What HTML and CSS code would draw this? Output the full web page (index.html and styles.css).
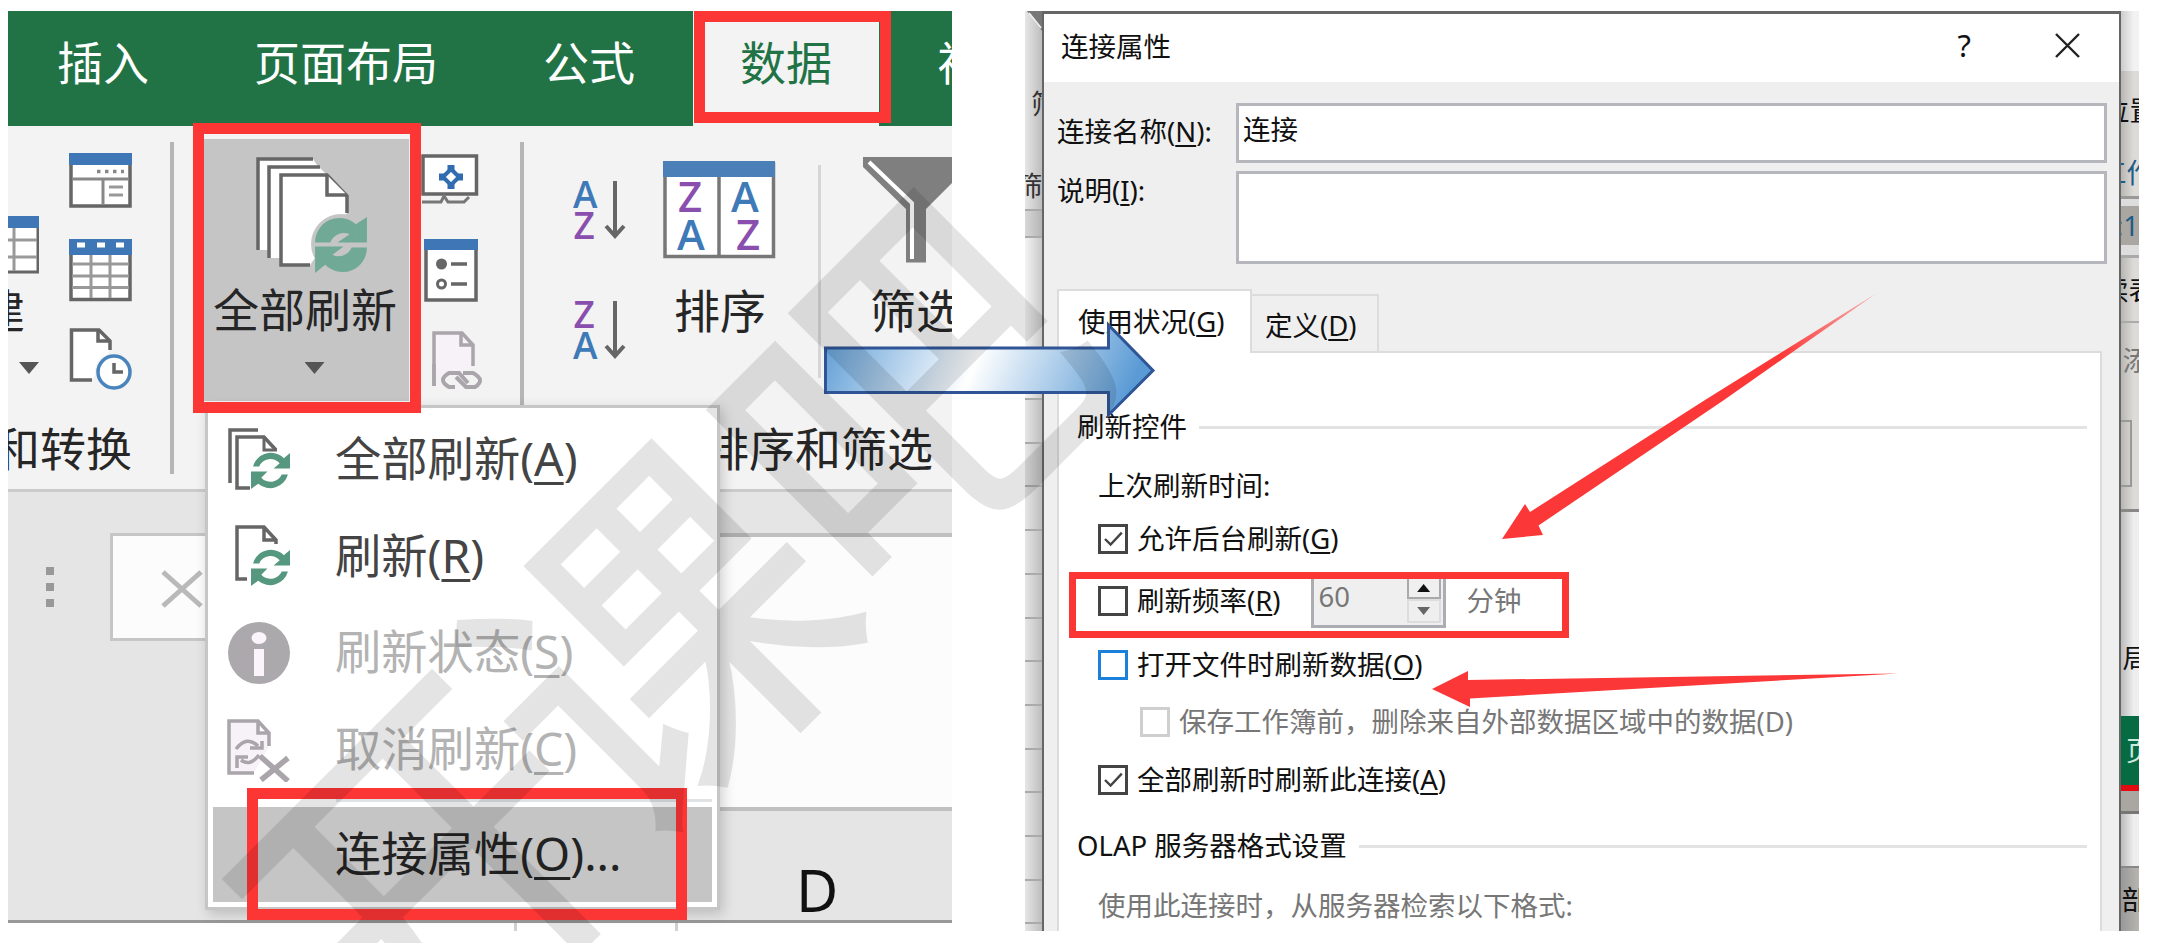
FILE: index.html
```html
<!DOCTYPE html>
<html lang="zh-CN">
<head>
<meta charset="utf-8">
<title>连接属性</title>
<link rel="stylesheet" href="styles.css">
</head>
<body>
<svg class="defs" width="0" height="0" aria-hidden="true">
  <defs>
    <symbol id="cycle" viewBox="0 0 56 56">
      <path d="M3 26A24 24 0 0 1 43 8L54 1V26H25L37 18A14 14 0 0 0 18 26Z"/>
      <path d="M54 31A24 24 0 0 1 13 48L3 56V30H31L20 38A14 14 0 0 0 39 31Z"/>
    </symbol>
    <symbol id="thin-cycle" viewBox="0 0 40 40">
      <path d="M3 15A18 18 0 0 1 33 7L39 2V17H23L29 12A12 12 0 0 0 9 15Z"/>
      <path d="M37 23A18 18 0 0 1 8 32L1 37V20H17L11 26A12 12 0 0 0 31 23Z"/>
    </symbol>
  </defs>
</svg>

<main class="stage">
  <section class="excel">
    <nav class="tabs">
      <span class="tab">插入</span><span class="tab">页面布局</span><span class="tab">公式</span><span class="tab active">数据</span><span class="tab">视图</span>
    </nav>
    <div class="ribbon">
      <div class="group g-transform">
        <div class="tools">
          <div class="col-new">
            <svg width="31" height="58" viewBox="8 216 31 58"><path d="M0 217H38V272H0Z" fill="#fff" stroke="#666" stroke-width="3"/><path d="M0 216H39V228H0Z" fill="#3f76b5"/><path d="M8 240H37M8 257H37M14 228V271" stroke="#999" stroke-width="3"/></svg>
            <span class="cut-new">建</span>
            <i class="caret"></i>
          </div>
          <div class="col-small">
            <svg width="63" height="55" viewBox="69 153 63 55"><path d="M71 155H130V206H71Z" fill="#fff" stroke="#666" stroke-width="3.5"/><path d="M69 153H132V165H69Z" fill="#3f76b5"/><path d="M72 179H129M103 180V205" stroke="#888" stroke-width="3"/><path d="M97 171.500H124" stroke="#888" stroke-width="3.500" stroke-dasharray="3.500 4.500"/><path d="M109 187H123M109 195H123" stroke="#999" stroke-width="3"/></svg>
            <svg width="63" height="63" viewBox="69 239 63 63"><path d="M71 241H130V299.500H71Z" fill="#fff" stroke="#666" stroke-width="3.5"/><path d="M69 239H132V255H69Z" fill="#3f76b5"/><path d="M77 245H85M97 245H105M116 245H124" stroke="#fff" stroke-width="5"/><path d="M72 264H129M72 276H129M72 287.500H129M91 255V298M110 255V298" stroke="#999" stroke-width="3"/></svg>
            <svg width="63" height="64" viewBox="69 327 63 64"><path d="M92 380H71.500V330H99L110 341V350" fill="#fff" stroke="#666" stroke-width="3.5"/><path d="M98 330V341H110" fill="none" stroke="#666" stroke-width="3.5"/><circle cx="114" cy="372" r="19" fill="#f3f3f3"/><circle cx="114" cy="372" r="16" fill="#fff" stroke="#4a84bd" stroke-width="3.5"/><path d="M114 363V372H123" fill="none" stroke="#666" stroke-width="3.5"/></svg>
          </div>
        </div>
        <div class="g-label"><span>和转换</span></div>
      </div>
      <div class="group g-connect">
        <div class="refresh">
          <svg width="113" height="118" viewBox="254 157 113 118"><g fill="#fff" stroke="#666" stroke-width="3.5"><path d="M256 250V159H312L320 171V250" stroke="none"/><path d="M257 250V159H312" fill="none"/><path d="M267 258V167H318L326 175V258" stroke="none"/><path d="M268 258V167H319" fill="none"/><path d="M309 265H280V175H326L346 196V213" /><path d="M326 175V195H346"/></g><circle cx="340" cy="244" r="30" fill="#c5c5c5"/><use href="#cycle" x="311" y="216" width="57" height="57" fill="#71a997"/></svg>
          <span>全部刷新</span>
          <i class="caret"></i>
        </div>
        <div class="col-mini">
          <svg width="58" height="51" viewBox="421 154 58 51"><path d="M423 156H476.500V194H423Z" fill="#fff" stroke="#666" stroke-width="3.5"/><path d="M422 202H441L444 196 448 202H464L469 197" fill="none" stroke="#777" stroke-width="3"/><path d="M451 169L459 177 451 185 443 177Z" fill="#fff" stroke="#2f6cb0" stroke-width="4"/><path d="M447.500 165H454.500V171H447.500ZM447.500 183H454.500V189H447.500ZM439 173.500H445V180.500H439ZM457 173.500H463V180.500H457Z" fill="#2f6cb0"/></svg>
          <svg width="54" height="63" viewBox="424 239 54 63"><path d="M426 241H476V300H426Z" fill="#fff" stroke="#666" stroke-width="3.5"/><path d="M424 239H478V250H424Z" fill="#3f76b5"/><circle cx="441.500" cy="264" r="5.500" fill="#666"/><circle cx="441.500" cy="284" r="4" fill="none" stroke="#666" stroke-width="3"/><path d="M451 264H467M451 284H467" stroke="#666" stroke-width="3.5"/></svg>
          <svg class="link" width="52" height="60" viewBox="431 331 52 60"><path d="M434 386V333H462L473 345V366" fill="#f6f2f8" stroke="#aaa5aa" stroke-width="3.5"/><path d="M461 333V345H473" fill="none" stroke="#aaa5aa" stroke-width="3.500"/><path d="M436 370H483V391H436Z" fill="#f3f3f3"/><path d="M434 386V364" stroke="#aaa5aa" stroke-width="3.500"/><path d="M455 387H449Q437 380 449 373H459L468 383M463 373H473Q486 380 475 387H466L456 377" fill="none" stroke="#aaa5aa" stroke-width="4"/></svg>
        </div>
      </div>
      <div class="group g-sort">
        <div class="tools">
          <svg class="az" width="54" height="182" viewBox="573 179 54 182"><g class="letters"><text class="a" x="573" y="208">A</text><text class="z" x="573.500" y="239">Z</text><text class="z" x="573.500" y="328">Z</text><text class="a" x="573" y="359">A</text></g><path d="M615 181V236M606 226L615 236 624 226M615 301V356M606 346L615 356 624 346" fill="none" stroke="#666" stroke-width="4"/></svg>
          <div class="sort-main">
            <svg width="113" height="98" viewBox="663 161 113 98"><path d="M665 164H773.500V256.500H665Z" fill="#fff" stroke="#777" stroke-width="3.5"/><path d="M663 161H775V177H663Z" fill="#4a7fb8"/><path d="M719 177V256" stroke="#777" stroke-width="3.500"/><g class="letters big"><text class="z" x="678" y="212">Z</text><text class="a" x="731" y="212">A</text><text class="a" x="677" y="250">A</text><text class="z" x="736" y="250">Z</text></g></svg>
            <span>排序</span>
          </div>
        </div>
        <div class="g-label"><span>排序和筛选</span></div>
      </div>
      <div class="group g-filter">
        <svg width="106" height="106" viewBox="863 157 106 106"><path d="M863 157H969V166L926 209V262.500H906V209L863 167Z" fill="#7f7f7f"/><path d="M869 162L912 203V259" fill="none" stroke="#fff" stroke-width="4"/></svg>
        <span>筛选</span>
      </div>
    </div>
    <div class="formula">
      <div class="dots"><i></i><i></i><i></i></div>
      <div class="cancel"><svg width="44" height="40" viewBox="0 0 44 40"><path d="M3 3L41 37M41 3L3 37" stroke="#b9b9b9" stroke-width="5"/></svg></div>
      <div class="entry"></div>
    </div>
    <div class="colhead"><span>D</span></div>
    <div class="cells"></div>

    <div class="menu">
      <div class="item"><svg width="64" height="64" viewBox="227 428 64 64"><path d="M230 483V430H258M250 488H237V437H264L276 450" fill="none" stroke="#666" stroke-width="3.500"/><path d="M264 437V450H277" fill="none" stroke="#666" stroke-width="3"/><use href="#thin-cycle" x="250" y="451" width="41" height="41" fill="#55977f"/></svg><span>全部刷新(<u>A</u>)</span></div>
      <div class="item"><svg width="64" height="64" viewBox="227 524 64 64"><path d="M247 578H237V526H264L276 539V543M264 526V539H277" fill="none" stroke="#666" stroke-width="3.500"/><use href="#thin-cycle" x="250" y="547" width="41" height="41" fill="#55977f"/></svg><span>刷新(<u>R</u>)</span></div>
      <div class="item off"><svg width="64" height="64" viewBox="0 0 64 64"><circle cx="32" cy="32" r="31" fill="#aca9ad"/><ellipse cx="32" cy="17" rx="7.500" ry="6" fill="#fbf5fb"/><path d="M27 28H37V55H27Z" fill="#fbf5fb"/></svg><span>刷新状态(<u>S</u>)</span></div>
      <div class="item off"><svg width="64" height="64" viewBox="227 717 64 64"><path d="M254 772H229V720H258L269 732V745M258 720V732H269" fill="#f6f2f8" stroke="#aaa5aa" stroke-width="3.500"/><path d="M236 748Q247 734 258 745M262 740V747H250M259 754Q250 766 241 759M237 767V756H248" fill="none" stroke="#aaa5aa" stroke-width="3.500"/><path d="M260 755L288 780M288 757L261 779" stroke="#aaa5aa" stroke-width="5.500"/></svg><span>取消刷新(<u>C</u>)</span></div>
      <div class="rule"></div>
      <div class="item hot"><span>连接属性(<u>O</u>)...</span></div>
    </div>
    <div class="mark m-tab"></div>
    <div class="mark m-refresh"></div>
    <div class="mark m-item"></div>
  </section>

  <section class="shot">
    <div class="edge-left">
      <svg width="17" height="22" viewBox="0 0 17 22"><path d="M2 0L17 20V0Z" fill="#777"/><path d="M4 2L16 17" stroke="#eee" stroke-width="2"/></svg>
      <span class="t1">筛</span><span class="t2">筛</span>
      <div class="bar"></div><div class="sheet"></div><div class="rows"></div>
    </div>
    <div class="dialog">
      <header class="title"><span>连接属性</span><b>?</b><svg width="25" height="25" viewBox="0 0 25 25"><path d="M1 1L24 24M24 1L1 24" stroke="#222" stroke-width="2.400"/></svg></header>
      <div class="form">
        <label>连接名称(<u>N</u>):</label><div class="field">连接</div>
        <label>说明(<u>I</u>):</label><div class="field tall"></div>
      </div>
      <div class="dtabs"><span class="dtab on">使用状况(<u>G</u>)</span><span class="dtab">定义(<u>D</u>)</span></div>
      <div class="pane">
        <div class="sect"><span>刷新控件</span><i></i></div>
        <div class="row">上次刷新时间:</div>
        <div class="row"><svg class="box" viewBox="0 0 30 30"><path d="M5 15L12 22 26 7"/></svg><span>允许后台刷新(<u>G</u>)</span></div>
        <div class="row"><i class="box"></i><span>刷新频率(<u>R</u>)</span>
          <div class="spin"><span>60</span><div class="btns"><b class="up"><i></i></b><b class="down"><i></i></b></div></div><em>分钟</em></div>
        <div class="row"><i class="box blue"></i><span>打开文件时刷新数据(<u>O</u>)</span></div>
        <div class="row sub"><i class="box pale"></i><span>保存工作簿前，删除来自外部数据区域中的数据(D)</span></div>
        <div class="row"><svg class="box" viewBox="0 0 30 30"><path d="M5 15L12 22 26 7"/></svg><span>全部刷新时刷新此连接(<u>A</u>)</span></div>
        <div class="sect"><span>OLAP 服务器格式设置</span><i></i></div>
        <div class="row grey">使用此连接时，从服务器检索以下格式:</div>
      </div>
    </div>
    <div class="edge-right">
      <div class="r r1"></div><div class="r r2"><span>位置</span></div><div class="r r3"><span>工作</span></div>
      <div class="r r4"><span>:1</span></div><div class="r r5"><span>续表</span></div><div class="r r6"><span>添</span><div class="btn"></div></div>
      <div class="r r7"><span>局</span></div><div class="r r8"><span>页面</span></div><div class="r r9"></div><div class="r r10"></div><div class="r r11"><span>部</span></div>
    </div>
    <div class="mark m-row"></div>
  </section>

  <svg class="overlay" width="2166" height="943" viewBox="0 0 2166 943">
    <defs>
      <linearGradient id="blue" x1="0" y1="0" x2="1" y2=".12"><stop offset="0" stop-color="#5b9bd5"/><stop offset=".5" stop-color="#fff"/><stop offset="1" stop-color="#5b9bd5"/></linearGradient>
      <linearGradient id="fade1" gradientUnits="userSpaceOnUse" x1="1780" y1="0" x2="1880" y2="0"><stop offset="0" stop-color="#fc3737"/><stop offset="1" stop-color="#fc3737" stop-opacity=".3"/></linearGradient>
    </defs>
    <path d="M825.500 348H1108.500V325L1153 370.500 1108.500 415V392.500H825.500Z" fill="url(#blue)" stroke="#2f5597" stroke-width="3"/>
    <path d="M1502 539L1525 504 1530 512 1705 400 1877 293 1724 400 1538.500 525.500 1543 535Z" fill="url(#fade1)"/>
    <path d="M1432 689L1468 671V680L1898 673.500 1470 698.500V707Z" fill="#fc3737"/>
    <text class="watermark" transform="translate(382 1110) rotate(-45)" x="20 347 698">开课吧</text>
  </svg>
</main>
</body>
</html>
```
FILE: styles.css
```css
* { box-sizing: border-box; }
body {
  margin: 0;
  background: #fff;
  font-family: "Noto Sans", "Noto Sans CJK SC", sans-serif;
  line-height: 1;
  white-space: nowrap;
}
i, em, b { font-style: normal; font-weight: 400; }
svg { display: block; flex: none; }
u { text-decoration-thickness: .06em; text-underline-offset: .12em; }
.defs { position: absolute; }
.stage {
  position: relative;
  width: 2166px;
  height: 943px;
  overflow: hidden;
  display: flex;
  gap: 73px;
  padding: 11px 8px 12px;
}

/* spreadsheet window */
.excel {
  position: relative;
  width: 944px;
  height: 920px;
  overflow: hidden;
  flex: none;
  background: #e5e5e5;
  font-size: 46px;
  color: #262626;
}
.tabs {
  display: flex;
  gap: 11px;
  height: 115px;
  padding-left: 2px;
  background: #217346;
  color: #fff;
}
.tab { padding: 28px 47px 0; flex: none; }
.tab.active { background: #f3f3f3; color: #217346; }
.ribbon {
  display: flex;
  height: 366px;
  background: #f3f3f3;
  border-bottom: 3px solid #cbcbcb;
}
.group { position: relative; flex: none; }
.g-label { display: flex; justify-content: flex-end; }
.tools { display: flex; height: 276px; }
.g-transform { width: 166px; }
.g-transform::after, .g-connect::after, .g-sort::after {
  content: "";
  position: absolute;
  right: 0;
  top: 16px;
  width: 4px;
  height: 332px;
  background: #b5b5b5;
}
.g-sort::after { top: 39px; height: 213px; width: 3px; background: #d6d6d6; }
.g-transform .g-label { padding: 23px 42px 0 0; height: 80px; }
.col-new { width: 61px; padding-top: 90px; }
.cut-new { display: flex; justify-content: flex-end; width: 17px; margin-top: 13px; }
.caret {
  display: block;
  width: 20px;
  height: 12px;
  background: #555;
  clip-path: polygon(0 0, 100% 0, 50% 100%);
}
.col-new .caret { margin: 29px 0 0 11px; }
.col-small { padding-top: 27px; display: flex; flex-direction: column; }
.col-small svg:nth-child(2) { margin-top: 31px; }
.col-small svg:nth-child(3) { margin-top: 25px; }
.g-connect { width: 350px; display: flex; padding: 13px 0 0 30px; }
.refresh {
  width: 205px;
  height: 262px;
  background: #c5c5c5;
  display: flex;
  flex-direction: column;
  align-items: center;
  padding-top: 18px;
}
.refresh svg { margin-left: 10px; }
.refresh span { margin: 11px 0 0 -3px; }
.refresh .caret { margin: 30px 0 0 16px; }
.col-mini { padding: 15px 0 0 12px; }
.col-mini svg:nth-child(2) { margin: 34px 0 0 3px; }
.col-mini .link { margin: 29px 0 0 10px; }
.g-sort { width: 297px; }
.az { margin: 53px 0 0 49px; }
.sort-main { margin: 35px 0 0 36px; display: flex; flex-direction: column; align-items: center; }
.sort-main span { margin: 28px 0 0 1px; }
.letters { font: 600 37px "Open Sans", "Noto Sans", sans-serif; }
.big { font-size: 42px; }
.letters .a { fill: #3f7ab8; }
.letters .z { fill: #8a4fae; }
.g-sort .g-label { padding-top: 23px; margin-right: -112px; }
.g-filter { padding: 31px 0 0 42px; }
.g-filter span { display: block; margin: 24px 0 0 7px; }

.formula { display: flex; height: 317px; padding-top: 41px; }
.dots { width: 102px; padding: 34px 0 0 38px; display: grid; gap: 8px; align-content: start; }
.dots i { width: 8px; height: 8px; background: #999; }
.cancel { width: 540px; height: 108px; padding: 33px 0 0 47px; background: #fcfcfc; border: 3px solid #c6c6c6; }
.entry { flex: 1; height: 278px; background: #fcfcfc; border: solid #c0c0c0; border-width: 4px 0; }
.colhead { height: 114px; padding: 52px 0 0 788px; font-size: 58px; color: #111; border-bottom: 3px solid #999; }
.cells {
  height: 8px;
  background: linear-gradient(90deg, #fff 506px, #d0d0d0 506px 509px, #fff 509px 667px, #d0d0d0 667px 670px, #fff 670px);
}

.menu {
  position: absolute;
  left: 197px;
  top: 394px;
  width: 515px;
  height: 505px;
  padding: 4px 5px;
  background: #fff;
  border: 3px solid #c6c6c6;
  box-shadow: 3px 4px 12px rgba(0, 0, 0, .18);
  color: #444;
  font-size: 46.300px;
}
.item { height: 96.500px; display: flex; align-items: center; padding-left: 14px; gap: 44px; }
.item span { margin-top: -2px; }
.item.off { color: #b3b3b3; }
.rule { height: 3px; margin: 1px 0 5px 123px; background: #e0e3e6; }
.item.hot { height: 95px; background: #c5c5c5; color: #222; padding-left: 122px; }
.item.hot span { margin-top: 0; }

.mark { position: absolute; border: 11px solid #fc3535; }
.m-tab { left: 686px; top: 0; width: 197px; height: 112px; }
.m-refresh { left: 185px; top: 112px; width: 228px; height: 290px; }
.m-item { left: 239px; top: 777px; width: 440px; height: 132px; }
.m-row { left: 44px; top: 561px; width: 500px; height: 66px; border-width: 7px; }

/* dialog window */
.shot {
  position: relative;
  width: 1114px;
  height: 920px;
  overflow: hidden;
  display: flex;
  flex: none;
  font-size: 27.500px;
  color: #111;
}
.edge-left { position: relative; width: 17px; height: 920px; overflow: hidden; background: linear-gradient(90deg, #e6e6e6, #bdbdbd); }
.edge-left span { display: block; color: #333; }
.edge-left .t1 { margin: 57px 0 0 6px; }
.edge-left .t2 { margin: 54px 0 0 -10px; }
.bar { height: 29px; margin-top: 10px; border: solid #aaa; border-width: 2px 0; background: linear-gradient(90deg, #d8d8d8, #b5b5b5); }
.sheet { height: 160px; background: linear-gradient(90deg, #f4f4f4, #c8c8c8); }
.rows {
  height: 540px;
  background: repeating-linear-gradient(180deg, transparent 0 41.700px, #aaa 41.700px 43.700px);
  border-top: 2px solid #aaa;
}
.dialog {
  width: 1079px;
  height: 930px;
  flex: none;
  background: #efefef;
  border: solid #666;
  border-width: 3px 2px;
}
.title { display: flex; height: 68px; background: #fff; padding: 19px 39px 0 17px; }
.title b { margin-left: auto; font-size: 31px; margin-top: -3px; }
.title svg { margin: 0 0 0 84px; }
.form {
  display: grid;
  grid-template-columns: 179px 871px;
  grid-template-rows: 60px 93px;
  row-gap: 8px;
  padding: 21px 0 0 13px;
}
.form label { padding: 15px 0 0 0; }
.form label:nth-of-type(2) { padding-top: 6px; }
.field { background: #fff; border: 3px solid #b5b7bd; padding: 10px 4px; }
.dtabs { display: flex; align-items: flex-end; height: 63px; margin: 26px 0 -2px 13px; }
.dtab { height: 59px; border: 2px solid #dcdcdc; border-left: 0; padding: 16px 18px 0 13px; width: 127px; }
.dtab.on { position: relative; height: 64px; width: 195px; background: #fff; border-left: 2px solid #dcdcdc; border-bottom: 0; padding: 17px 0 0 19px; }
.pane {
  width: 1045px;
  height: 590px;
  margin-left: 13px;
  background: #fff;
  border: 2px solid #dcdcdc;
  padding: 46px 13px 0 18px;
  display: grid;
  grid-template-rows: 56px 62px 44px 80px 48px 66px 50px 82px 38px;
}
.sect { display: flex; align-items: center; gap: 12px; }
.sect i { flex: 1; height: 3px; background: #e3e3e3; }
.row { display: flex; align-items: center; padding-left: 21px; }
.row.sub { padding-left: 63px; color: #777; }
.row.grey { color: #777; }
.box { width: 30px; height: 30px; border: 3px solid #444; margin-right: 9px; flex: none; background: #fff; }
.box path { fill: none; stroke: #444; stroke-width: 3; }
.box.blue { border-color: #1a80d9; }
.box.pale { border-color: #cfcfcf; }
.spin { width: 135px; height: 54px; margin: 0 0 0 30px; background: #efefef; border: 3px solid #abadb3; display: flex; color: #777; }
.spin span { padding: 6px 0 0 5px; width: 93px; }
.btns { width: 34px; display: grid; grid-template-rows: 22px 24px; }
.btns b { border: 2px solid #ddd; display: flex; align-items: center; justify-content: center; }
.btns .up { border-color: #eee #aaa #aaa; }
.btns i { width: 13px; height: 8px; background: #111; clip-path: polygon(50% 0, 100% 100%, 0 100%); }
.btns .down i { background: #666; clip-path: polygon(0 0, 100% 0, 50% 100%); }
.row em { color: #777; margin-left: 21px; }

.edge-right { width: 18px; height: 920px; overflow: hidden; background: #d8d6d3; }
.r { position: relative; width: 18px; overflow: hidden; display: flex; justify-content: flex-end; align-items: center; background: linear-gradient(90deg, #b8b6b3, #dddbd8 70%); }
.r1 { height: 60px; background: linear-gradient(90deg, #ccc, #f2f2f2 70%); }
.r2 { height: 79px; }
.r2 span { margin-right: -18px; }
.r3 { height: 49px; border-bottom: 3px solid #999; color: #1c5c86; }
.r3 span { margin-right: -15px; }
.r4 { height: 56px; border: solid #ddd; border-width: 7px 0 10px; background: #aaa7a2; color: #1c5c86; }
.r5 { height: 68px; border: solid #aaa; border-width: 3px 0 2px; }
.r5 span { margin-right: -17px; }
.r6 { height: 189px; border-bottom: 3px solid #888; align-items: flex-start; padding-top: 24px; color: #777; }
.r6 span { margin-right: -11px; }
.btn { position: absolute; left: -2px; top: 97px; width: 13px; height: 67px; border: 2px solid #999; }
.r7 { height: 204px; background: linear-gradient(90deg, #bbb, #eee 70%); padding-top: 90px; }
.r7 span { margin-right: -11px; }
.r8 { height: 75px; background: #066b42; border-bottom: 6px solid #e30b12; color: #cfe8dc; }
.r8 span { margin-right: -42px; }
.r9 { height: 23px; background: #aaa7a2; border-bottom: 3px solid #777; }
.r10 { height: 54px; background: linear-gradient(90deg, #bbb, #eee 70%); border-bottom: 2px solid #888; }
.r11 { height: 63px; background: linear-gradient(90deg, #999, #b8b5b0); }
.r11 span { margin-right: -10px; }

.overlay { position: absolute; left: 0; top: 0; }
.watermark { font: 400 355px "Noto Sans CJK SC", sans-serif; fill: #000; stroke: #000; stroke-width: 3; opacity: .1; }
```
